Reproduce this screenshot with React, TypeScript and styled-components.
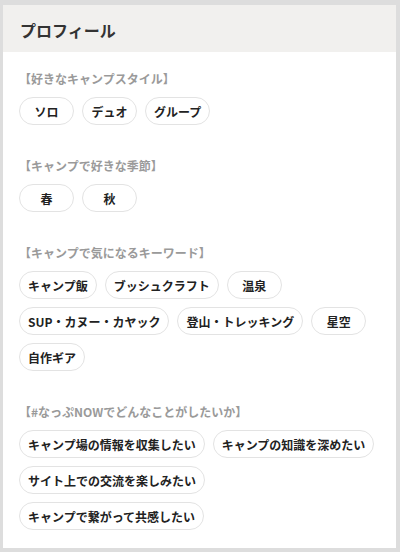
import React from "react";
import styled, { createGlobalStyle } from "styled-components";

const Global = createGlobalStyle`
  html, body { margin: 0; padding: 0; }
  body {
    background: #dddddd;
    font-family: "Noto Sans CJK JP", "Noto Sans", sans-serif;
  }
  #root { padding: 5px 4px 5px 3px; }
`;

const Card = styled.div`
  width: 393px;
  background: #ffffff;
  padding-bottom: 18px;
`;

const Header = styled.div`
  height: 47px;
  background: #f1f0ee;
  display: flex;
  align-items: center;
  padding: 3px 17px 0;
  box-sizing: border-box;
`;

const Title = styled.h2`
  margin: 0;
  font-size: 16px;
  font-weight: 700;
  color: #333333;
  line-height: 1;
`;

const Body = styled.div`
  padding: 18px 16px 0;
  display: flex;
  flex-direction: column;
  gap: 32px;
`;

const Section = styled.section`
  display: flex;
  flex-direction: column;
  gap: 9px;
`;

const Label = styled.div`
  font-size: 12px;
  line-height: 18px;
  font-weight: 700;
  color: #9a9a9a;
`;

const ChipList = styled.div`
  display: flex;
  flex-wrap: wrap;
  gap: 8px 8px;
`;

const Chip = styled.span`
  display: inline-flex;
  align-items: center;
  justify-content: center;
  height: 28px;
  min-width: 55px;
  box-sizing: border-box;
  padding: 0 8px;
  border: 1px solid #e3e3e3;
  border-radius: 14px;
  font-size: 12px;
  font-weight: 700;
  color: #222222;
  white-space: nowrap;
`;

const sections: { label: string; items: string[] }[] = [
  { label: "【好きなキャンプスタイル】", items: ["ソロ", "デュオ", "グループ"] },
  { label: "【キャンプで好きな季節】", items: ["春", "秋"] },
  {
    label: "【キャンプで気になるキーワード】",
    items: [
      "キャンプ飯",
      "ブッシュクラフト",
      "温泉",
      "SUP・カヌー・カヤック",
      "登山・トレッキング",
      "星空",
      "自作ギア",
    ],
  },
  {
    label: "【#なっぷNOWでどんなことがしたいか】",
    items: [
      "キャンプ場の情報を収集したい",
      "キャンプの知識を深めたい",
      "サイト上での交流を楽しみたい",
      "キャンプで繋がって共感したい",
    ],
  },
];

export default function App() {
  return (
    <>
      <Global />
      <Card>
        <Header>
          <Title>プロフィール</Title>
        </Header>
        <Body>
          {sections.map((s) => (
            <Section key={s.label}>
              <Label>{s.label}</Label>
              <ChipList>
                {s.items.map((i) => (
                  <Chip key={i}>{i}</Chip>
                ))}
              </ChipList>
            </Section>
          ))}
        </Body>
      </Card>
    </>
  );
}
